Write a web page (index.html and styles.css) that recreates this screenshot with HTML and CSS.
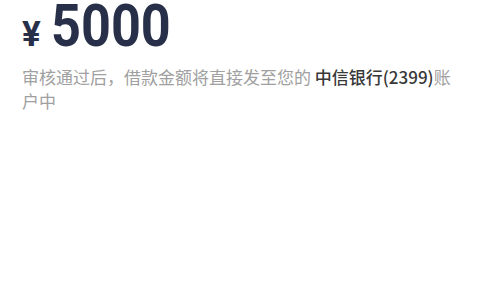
FILE: index.html
```html
<!DOCTYPE html>
<html>
<head>
<meta charset="utf-8">
<link rel="stylesheet" href="styles.css">
</head>
<body>
<div class="page">
  <div class="amount">
    <span class="yen">¥</span><span class="num">5000</span>
  </div>
  <p class="desc">审核通过后，借款金额将直接发至您的 <span class="bank">中信银行(2399)</span>账户中</p>
</div>
</body>
</html>
```
FILE: styles.css
```css
html, body {
  margin: 0;
  padding: 0;
  background: #ffffff;
}
.page {
  width: 480px;
  height: 300px;
  padding: 0 22px;
  box-sizing: border-box;
  font-family: "Noto Sans CJK SC", "Noto Sans", sans-serif;
}
.amount {
  display: flex;
  align-items: baseline;
  color: #283049;
  height: 56px;
  margin-top: -10px;
}
.yen {
  font-family: Roboto, "Noto Sans", sans-serif;
  font-weight: 700;
  font-size: 35px;
  width: 29px;
}
.num {
  font-family: Roboto, sans-serif;
  font-weight: 700;
  font-size: 60px;
  display: inline-block;
  transform: scaleX(0.87);
  transform-origin: left;
}
.desc {
  margin: 19px 0 0;
  font-size: 17px;
  line-height: 24px;
  color: #a0a0a0;
}
.bank {
  color: #383838;
  font-weight: 500;
}
```
